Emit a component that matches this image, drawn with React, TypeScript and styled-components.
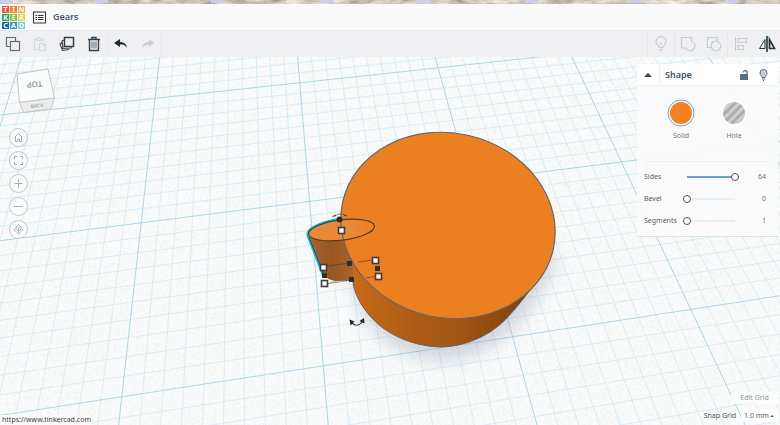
import React, { useState } from "react";
import styled, { createGlobalStyle } from "styled-components";

const GlobalStyle = createGlobalStyle`
  * { box-sizing: border-box; }
  html, body { margin: 0; height: 100%; }
  body { font-family: "Noto Sans", "Open Sans", sans-serif; font-size: 9px; color: #5c6b7c; overflow: hidden; }
  button, input, select { font: inherit; color: inherit; margin: 0; }
`;

const Page = styled.div`
  display: flex;
  flex-direction: column;
  min-height: 100vh;
  background: #f8f9f9;
`;

const PhotoStrip = styled.svg`
  display: block;
  width: 100%;
  height: 4px;
`;

const Header = styled.header`
  display: flex;
  align-items: center;
  height: 26px;
  padding-left: 1px;
  background: #fafafa;
`;

const Logo = styled.a`
  display: grid;
  grid-template-columns: repeat(3, 7px);
  grid-auto-rows: 7px;
  gap: 1px;
  padding: 1px;
  background: #fff;
  text-decoration: none;
`;

const LogoTile = styled.span<{ $color: string }>`
  display: flex;
  align-items: center;
  justify-content: center;
  background: ${(p) => p.$color};
  color: #fff;
  font-size: 7px;
  line-height: 7px;
  font-weight: 700;
`;

const MenuButton = styled.button`
  display: flex;
  margin-left: 7px;
  padding: 0;
  border: 0;
  background: none;
`;

const DesignName = styled.h1`
  margin: 0 0 0 7px;
  font-size: 9px;
  line-height: 14px;
  font-weight: 600;
  color: #46586b;
`;

const Toolbar = styled.div`
  display: flex;
  justify-content: space-between;
  height: 27px;
  background: #f0f0f3;
  border-top: 1px solid #e6e7ec;
`;

const ToolSide = styled.div`
  display: flex;
`;

const ToolGroup = styled.div<{ $side: "left" | "right" }>`
  display: flex;
  gap: ${(p) => (p.$side === "left" ? "1px" : "0")};
  border-right: ${(p) => (p.$side === "left" ? "1px solid #e6e7ea" : "0")};
  border-left: ${(p) => (p.$side === "right" ? "1px solid #e6e7ea" : "0")};
`;

const ToolButton = styled.button<{ $tone: string }>`
  display: flex;
  align-items: center;
  justify-content: center;
  width: 26px;
  padding: 0;
  border: 0;
  background: none;
  color: ${(p) => p.$tone};
`;

const Workspace = styled.main`
  flex: 1;
  display: grid;
  grid-template: minmax(0, 1fr) / minmax(0, 1fr);
  min-height: 0;
  overflow: hidden;
`;

const Scene = styled.svg`
  grid-area: 1 / 1;
  display: block;
  width: 100%;
  height: 100%;
`;

const Overlay = styled.div`
  grid-area: 1 / 1;
  z-index: 1;
  display: flex;
  justify-content: space-between;
`;

const LeftRail = styled.nav`
  display: flex;
  flex-direction: column;
  align-items: flex-start;
  padding-top: 10px;
`;

const ViewCube = styled.svg`
  margin-left: 14px;
  width: 44px;
  height: 48px;
`;

const ViewControls = styled.div`
  display: flex;
  flex-direction: column;
  gap: 4px;
  margin: 13px 0 0 9px;
`;

const RoundButton = styled.button`
  display: flex;
  align-items: center;
  justify-content: center;
  width: 19px;
  height: 19px;
  padding: 0;
  border: 1px solid #c4c8ca;
  border-radius: 50%;
  background: rgba(252, 252, 252, 0.8);
  color: #a9aeb2;
`;

const StatusUrl = styled.div`
  margin-top: auto;
  padding: 0 1px 0 2px;
  font-size: 7px;
  line-height: 10px;
  color: #444;
  background: #fafafa;
`;

const RightRail = styled.div`
  display: flex;
  flex-direction: column;
  justify-content: space-between;
  align-items: flex-end;
  padding: 7px 2px 3px 0;
`;

const Inspector = styled.section`
  width: 141px;
  background: rgba(251, 251, 252, 0.93);
  border-bottom: 1px solid #dfe2e6;
`;

const InspectorHeader = styled.div`
  display: flex;
  align-items: center;
  height: 22px;
  padding-right: 10px;
  background: #fff;
  border-bottom: 1px solid #eef0f1;
`;

const PlainButton = styled.button`
  display: flex;
  align-items: center;
  justify-content: center;
  padding: 0;
  border: 0;
  background: none;
  color: #5d6c7e;
`;

const CollapseButton = styled(PlainButton)`
  width: 23px;
  height: 100%;
  border-right: 1px solid #eef0f1;
  color: #2c4158;
`;

const InspectorTitle = styled.h2`
  flex: 1;
  margin: 0 0 0 5px;
  font-size: 9px;
  line-height: 14px;
  font-weight: 600;
  color: #42566b;
`;

const HeaderActions = styled.div`
  display: flex;
  gap: 10px;
`;

const Materials = styled.div`
  display: flex;
  justify-content: center;
  gap: 25px;
  margin: 0 7px;
  padding: 13px 0 19px;
  border-bottom: 1px solid #eff1f2;
`;

const Material = styled.button`
  display: flex;
  flex-direction: column;
  align-items: center;
  gap: 3px;
  width: 28px;
  padding: 0;
  border: 0;
  background: none;
  font-size: 7px;
  line-height: 12px;
  color: #6b7683;
`;

const Properties = styled.div`
  display: flex;
  flex-direction: column;
  padding: 4px 12px 4px 7px;
`;

const Property = styled.label`
  display: grid;
  grid-template-columns: 39px 56px 1fr;
  align-items: center;
  height: 22px;
  font-size: 7px;
  line-height: 12px;
  color: #4f5e70;
`;

const PropertyValue = styled.output`
  text-align: right;
  color: #66727f;
`;

const Range = styled.input<{ $filled: boolean }>`
  appearance: none;
  width: 56px;
  height: 10px;
  background: transparent;

  &::-webkit-slider-runnable-track {
    height: 2px;
    background-image: ${(p) =>
      p.$filled ? "linear-gradient(#6a9fe4, #6a9fe4)" : "linear-gradient(#eceeef, #eceeef)"};
    background-size: calc(100% - 8px) 2px;
    background-position: center;
    background-repeat: no-repeat;
  }
  &::-webkit-slider-thumb {
    appearance: none;
    width: 8px;
    height: 8px;
    margin-top: -3px;
    border: 1px solid #4d545c;
    border-radius: 50%;
    background: #fff;
  }
`;

const GridTools = styled.div`
  display: flex;
  flex-direction: column;
  align-items: flex-end;
  gap: 5px;
`;

const EditGrid = styled.button`
  width: 47px;
  height: 12px;
  padding: 0;
  border: 0;
  background: rgba(253, 253, 253, 0.9);
  font-size: 7px;
  line-height: 12px;
  color: #8a929a;
`;

const SnapLabel = styled.label`
  display: flex;
  align-items: center;
  gap: 5px;
  font-size: 7px;
  line-height: 13px;
  color: #4b5560;
`;

const SelectBox = styled.span`
  display: flex;
  align-items: center;
  width: 37px;
  height: 13px;
  padding: 0 4px 0 3px;
  background: rgba(253, 253, 253, 0.95);
  color: #5f6770;
`;

const Select = styled.select`
  flex: 1;
  min-width: 0;
  appearance: none;
  padding: 0;
  border: 0;
  background: none;
`;

/* ---------- workplane projection ---------- */

type Pt = [number, number];

const anchors: [Pt, Pt][] = [
  [[-1, 0], [3, 114.5]],
  [[0, 0], [155, 98.7]],
  [[1, 0], [299.3, 82.7]],
  [[0, 1], [143.3, 222.7]],
  [[1, 1], [310, 201.3]],
  [[0, 2], [121, 396.7]],
  [[1, 2], [322.7, 366]],
  [[2, 2], [512.3, 337]],
  [[3, 2], [691, 309.3]],
];

function solveProjection(pairs: [Pt, Pt][]): number[] {
  const m: number[][] = Array.from({ length: 8 }, () => new Array(9).fill(0));
  pairs.forEach(([[u, v], [px, py]]) => {
    const x = px / 100;
    const y = py / 100;
    [
      [u, v, 1, 0, 0, 0, -u * x, -v * x, x],
      [0, 0, 0, u, v, 1, -u * y, -v * y, y],
    ].forEach((row) => {
      for (let i = 0; i < 8; i++) for (let j = 0; j < 9; j++) m[i][j] += row[i] * row[j];
    });
  });
  for (let i = 0; i < 8; i++) {
    let p = i;
    for (let r = i + 1; r < 8; r++) if (Math.abs(m[r][i]) > Math.abs(m[p][i])) p = r;
    [m[i], m[p]] = [m[p], m[i]];
    for (let r = 0; r < 8; r++) {
      if (r === i) continue;
      const f = m[r][i] / m[i][i];
      for (let c = i; c < 9; c++) m[r][c] -= f * m[i][c];
    }
  }
  return m.map((row, i) => row[8] / row[i]);
}

const H = solveProjection(anchors);

const project = (u: number, v: number): Pt => {
  const w = H[6] * u + H[7] * v + 1;
  return [(100 * (H[0] * u + H[1] * v + H[2])) / w, (100 * (H[3] * u + H[4] * v + H[5])) / w];
};

const line = (a: Pt, b: Pt) => `M${a[0].toFixed(1)} ${a[1].toFixed(1)}L${b[0].toFixed(1)} ${b[1].toFixed(1)}`;

function gridPaths() {
  let minor = "";
  let major = "";
  const add = (i: number, d: string) => {
    if (i % 10 === 0) major += d;
    else minor += d;
  };
  for (let i = -30; i <= 70; i++) add(i, line(project(i / 10, -1), project(i / 10, 3)));
  for (let i = -10; i <= 30; i++) add(i, line(project(-3, i / 10), project(7, i / 10)));
  return { minor, major };
}

const grid = gridPaths();

const handles: Pt[] = [[341, 230], [323, 267], [324, 283], [375, 260], [378, 276]];
const knobs: Pt[] = [[349, 263], [351, 279], [324, 275], [377, 268]];

function Workplane() {
  return (
    <Scene viewBox="0 57 780 368" preserveAspectRatio="xMidYMid slice" role="img" aria-label="Workplane">
      <defs>
        <filter id="paper" x="0" y="0" width="100%" height="100%">
          <feTurbulence type="fractalNoise" baseFrequency="0.35" numOctaves="2" seed="4" />
          <feColorMatrix values="0 0 0 0 0.5  0 0 0 0 0.52  0 0 0 0 0.53  0.55 0 0 0 -0.22" />
        </filter>
        <filter id="soft" x="-30%" y="-30%" width="160%" height="160%">
          <feGaussianBlur stdDeviation="9" />
        </filter>
        <linearGradient id="side" x1="352" y1="0" x2="540" y2="0" gradientUnits="userSpaceOnUse">
          <stop offset="0" stopColor="#c96a18" />
          <stop offset="0.3" stopColor="#b05d15" />
          <stop offset="0.6" stopColor="#9d5412" />
          <stop offset="0.8" stopColor="#8c4a10" />
          <stop offset="1" stopColor="#6e3d12" />
        </linearGradient>
        <linearGradient id="smallSide" x1="310" y1="0" x2="353" y2="0" gradientUnits="userSpaceOnUse">
          <stop offset="0" stopColor="#a8622a" />
          <stop offset="0.5" stopColor="#965720" />
          <stop offset="1" stopColor="#a9632a" />
        </linearGradient>
        <linearGradient id="smallTop" x1="308" y1="0" x2="375" y2="0" gradientUnits="userSpaceOnUse">
          <stop offset="0" stopColor="#e8893a" />
          <stop offset="0.6" stopColor="#ea8a38" />
          <stop offset="1" stopColor="#eb8020" />
        </linearGradient>
      </defs>
      <rect x="0" y="57" width="780" height="368" fill="#fafbfb" />
      <rect x="0" y="57" width="780" height="368" filter="url(#paper)" opacity="0.5" />
      <path d={grid.minor} stroke="#c4e6f1" strokeWidth="1" fill="none" opacity="0.6" />
      <path d={grid.major} stroke="#a4d2e4" strokeWidth="1" fill="none" opacity="0.9" />

      <path d="M335 275L352 272C356 330 400 362 448 360C500 356 535 310 556 262L548 250L350 250Z" fill="#8796ad" opacity="0.36" filter="url(#soft)" />
      <path
        d="M350 258L353 282C355 298 367 316 383 328C401 341 423 347 442 347C464 346 483 338 497 327C511 316 523 299 537 281L549 258Z"
        fill="url(#side)"
        stroke="#6b6258"
        strokeWidth="1"
      />
      <path d="M308.500 234L324 275C328 282 345 283 352 279L353 265L344 232Z" fill="url(#smallSide)" />
      <ellipse cx="448" cy="225.500" rx="107.900" ry="92.400" transform="rotate(13 448 225.500)" fill="#ec8020" />
      <ellipse cx="341.500" cy="230" rx="33.200" ry="10.200" transform="rotate(-7 341.500 230)" fill="url(#smallTop)" />
      <ellipse cx="448" cy="225.500" rx="107.900" ry="92.400" transform="rotate(13 448 225.500)" fill="none" stroke="#62676b" strokeWidth="1.200" />
      <path d="M339 219C323 222 305 228 308 236L323 275" fill="none" stroke="#12b7e6" strokeWidth="2.500" />
      <ellipse cx="341.500" cy="230" rx="33.200" ry="10.200" transform="rotate(-7 341.500 230)" fill="none" stroke="#4f3a22" strokeWidth="1.200" />
      <path d="M309 237L324 275" stroke="#3a3a3a" strokeWidth="1" />
      <path d="M327 266L350 263M358 262L373 260M325 284L351 280M366 278L378 276" stroke="#5a4027" strokeWidth="0.700" fill="none" />
      <path d="M330 282L346 281" stroke="#8fcfe0" strokeWidth="1" />

      <g fill="none" stroke="#3d3d3d">
        <path d="M334 217Q340 211 346 216" strokeWidth="0.600" />
        <path d="M332.500 216.500L336 215M344 215L347 216" strokeWidth="1" />
        <path d="M351 322Q357 329 363 321" strokeWidth="1.200" />
      </g>
      <path d="M349.500 319.500L354.500 321.500L350.500 325.500ZM364 318L364.500 323.500L359.500 321Z" fill="#262626" />
      <circle cx="339.500" cy="219.500" r="3" fill="#2c2c2c" />
      {knobs.map(([x, y]) => (
        <rect key={`${x}-${y}`} x={x - 2} y={y - 2} width="5" height="5" fill="#2e2e2e" />
      ))}
      {handles.map(([x, y]) => (
        <rect key={`${x}-${y}`} x={x - 2.5} y={y - 2.5} width="6" height="6" fill="#f6f6f6" stroke="#3c3c3c" strokeWidth="1.600" />
      ))}
    </Scene>
  );
}

/* ---------- icons ---------- */

interface IconProps {
  w?: number;
  h?: number;
  sw?: number;
  children: React.ReactNode;
}

const Icon = ({ w = 16, h = 16, sw = 1.2, children }: IconProps) => (
  <svg width={w} height={h} viewBox={`0 0 ${w} ${h}`} fill="none" stroke="currentColor" strokeWidth={sw} aria-hidden="true">
    {children}
  </svg>
);

const CopyIcon = () => (
  <Icon>
    <path d="M5 10.500H1.500V1.500H10.500V5" />
    <rect x="5.500" y="5.500" width="9" height="9" />
  </Icon>
);
const PasteIcon = () => (
  <Icon>
    <path d="M6 13.500H2.500V3.500H4M10 3.500H11.500V6" />
    <path d="M4.500 4.500V2.500H6L7 1.500L8 2.500H9.500V4.500Z" />
    <path d="M7.500 7.500H11.500L13.500 9.500V14.500H7.500ZM11.500 7.500V9.500H13.500" />
  </Icon>
);
const DuplicateIcon = () => (
  <Icon sw={1.5}>
    <rect x="5.500" y="1.500" width="9" height="9" />
    <path d="M5 4L3 5L4 12.500L12 12L12.500 11M3 6.500L1 8L3.500 14.500L10 13.500" strokeWidth="1.100" />
  </Icon>
);
const TrashIcon = () => (
  <Icon sw={1.4}>
    <path d="M2 3.500H14M6 3V1.500H10V3M3.500 4V14.500H12.500V4" />
    <path d="M6 5.500V12.500M8 5.500V12.500M10 5.500V12.500" strokeWidth="0.800" />
  </Icon>
);
const UndoIcon = () => (
  <Icon>
    <path d="M1 7L7 3V6C11 6 13.500 8 14 12C12 9 10.500 8.500 7 8.500V11Z" fill="currentColor" stroke="none" />
  </Icon>
);
const RedoIcon = () => (
  <Icon>
    <path d="M14 7L9 3.500V6C5 6 2.500 8 2 12C4 9 6 8.500 9 8.500V11Z" fill="currentColor" stroke="none" />
  </Icon>
);
const BulbIcon = () => (
  <Icon>
    <path d="M6 11.500C6 9.500 3 8.500 3 5.700A5 5 0 0 1 13 5.700C13 8.500 10 9.500 10 11.500Z" />
    <path d="M6 13.500H10M7 15H9M6.500 6.500L8 8L9.500 6.500M8 8V11" strokeWidth="0.900" />
  </Icon>
);
const GroupIcon = () => (
  <Icon>
    <path d="M1.500 1.500H11.500V5A5 5 0 1 1 5.500 12H1.500Z" />
  </Icon>
);
const UngroupIcon = () => (
  <Icon>
    <path d="M5 11.500H1.500V1.500H11.500V5" />
    <circle cx="10" cy="10" r="4.800" />
    <path d="M5.500 8V5.500H9" strokeWidth="0.900" />
  </Icon>
);
const AlignIcon = () => (
  <Icon>
    <path d="M2.500 1V15M5 2.500H13.500V6.500H5ZM5 9.500H10.500V13.500H5Z" />
  </Icon>
);
const MirrorIcon = () => (
  <Icon w={18} sw={1}>
    <path d="M7 3.500V12.500H1.500Z" />
    <path d="M11.500 3.500V12.500H16.500Z" strokeWidth="1.700" />
    <path d="M9 0V16" strokeWidth="1.600" />
  </Icon>
);
const LockIcon = () => (
  <Icon w={9} h={12} sw={1.3}>
    <rect x="0" y="5" width="8" height="6" fill="currentColor" stroke="none" />
    <path d="M3.500 3.500V3A2 2 0 0 1 7 2.500V6" />
  </Icon>
);
const SmallBulbIcon = () => (
  <Icon w={9} h={12} sw={1}>
    <path d="M3 8.500C3 7 1 6.500 1 4A3.500 3.500 0 0 1 8 4C8 6.500 6 7 6 8.500Z" fill="#c9ced5" />
    <path d="M3 10H6M4 11.500H5" />
  </Icon>
);
const Caret = ({ size }: { size: number }) => (
  <svg width={size} height={size / 2} viewBox="0 0 8 4" aria-hidden="true">
    <path d="M4 0L8 4H0Z" fill="currentColor" />
  </svg>
);

const viewIcons: [string, React.ReactNode][] = [
  ["Home view", <path key="p" d="M1.500 5.500L5.500 1.500L9.500 5.500M2.500 5V9.500H4.500V7H6.500V9.500H8.500V5" />],
  ["Fit all in view", <path key="p" d="M1.500 4V1.500H4M7 1.500H9.500V4M9.500 7V9.500H7M4 9.500H1.500V7" />],
  ["Zoom in", <path key="p" d="M5.500 1.500V9.500M1.500 5.500H9.500" />],
  ["Zoom out", <path key="p" d="M1 5.500H10" />],
  ["Switch projection", <path key="p" strokeWidth="0.800" d="M3 2.500L5.500 1L8 2.500V5.500L5.500 7L3 5.500ZM5.500 4V9.500M3 2.500L5.500 4L8 2.500M2.500 4.500L1 6L5.500 10L10 6L8.500 4.500" />],
];

const logoTiles: [string, string][] = [
  ["T", "#f0522b"], ["I", "#f58025"], ["N", "#f9a847"],
  ["K", "#22a650"], ["E", "#7cc042"], ["R", "#d2d63c"],
  ["C", "#0c69b0"], ["A", "#3594d2"], ["D", "#7cc2e8"],
];

const DARK = "#30424b";
const MUTED = "#c3ced8";

function ShapeProperty(props: { label: string; min: number; max: number; initial: number }) {
  const [value, setValue] = useState(props.initial);
  return (
    <Property>
      {props.label}
      <Range
        type="range"
        min={props.min}
        max={props.max}
        value={value}
        $filled={value === props.max}
        onChange={(e) => setValue(Number(e.target.value))}
      />
      <PropertyValue>{value}</PropertyValue>
    </Property>
  );
}

export default function App() {
  return (
    <Page>
      <GlobalStyle />
      <PhotoStrip aria-hidden="true">
        <defs>
          <filter id="stone" x="0" y="0" width="100%" height="100%">
            <feTurbulence type="fractalNoise" baseFrequency="0.06 0.2" numOctaves="3" seed="8" />
            <feColorMatrix values="0.9 0 0 0 0.18  0.85 0 0 0 0.15  0.8 0 0 0 0.1  0 0 0 0 1" />
          </filter>
        </defs>
        <rect width="100%" height="4" filter="url(#stone)" />
        <g fill="#c7d0ea">
          {[-1, 94, 211, 320, 416, 525, 629, 725].map((x) => (
            <rect key={x} x={x} width="14" height="3" />
          ))}
        </g>
      </PhotoStrip>
      <Header>
        <Logo href="#" aria-label="Tinkercad">
          {logoTiles.map(([letter, color]) => (
            <LogoTile key={letter} $color={color}>{letter}</LogoTile>
          ))}
        </Logo>
        <MenuButton aria-label="Designs">
          <svg width="13" height="13" viewBox="0 0 13 13" fill="none" stroke="#2d3438" aria-hidden="true">
            <rect x="0.500" y="1" width="12" height="11" />
            <path d="M5 4.500H10.500M5 6.500H10.500M5 8.500H10.500M2.500 4.500H4M2.500 6.500H4M2.500 8.500H4" />
          </svg>
        </MenuButton>
        <DesignName>Gears</DesignName>
      </Header>
      <Toolbar role="toolbar">
        <ToolSide>
          <ToolGroup $side="left">
            <ToolButton $tone="#5f6e76" aria-label="Copy"><CopyIcon /></ToolButton>
            <ToolButton $tone="#d3dbe2" aria-label="Paste"><PasteIcon /></ToolButton>
            <ToolButton $tone={DARK} aria-label="Duplicate"><DuplicateIcon /></ToolButton>
            <ToolButton $tone={DARK} aria-label="Delete"><TrashIcon /></ToolButton>
          </ToolGroup>
          <ToolGroup $side="left">
            <ToolButton $tone="#1f2f33" aria-label="Undo"><UndoIcon /></ToolButton>
            <ToolButton $tone={MUTED} aria-label="Redo"><RedoIcon /></ToolButton>
          </ToolGroup>
        </ToolSide>
        <ToolSide>
          <ToolGroup $side="right">
            <ToolButton $tone={MUTED} aria-label="Show all"><BulbIcon /></ToolButton>
          </ToolGroup>
          <ToolGroup $side="right">
            <ToolButton $tone={MUTED} aria-label="Group"><GroupIcon /></ToolButton>
            <ToolButton $tone={MUTED} aria-label="Ungroup"><UngroupIcon /></ToolButton>
          </ToolGroup>
          <ToolGroup $side="right">
            <ToolButton $tone={MUTED} aria-label="Align"><AlignIcon /></ToolButton>
            <ToolButton $tone="#26343b" aria-label="Mirror"><MirrorIcon /></ToolButton>
          </ToolGroup>
        </ToolSide>
      </Toolbar>
      <Workspace>
        <Workplane />
        <Overlay>
          <LeftRail>
            <ViewCube viewBox="0 0 44 48" role="img" aria-label="View cube">
              <g stroke="#c3c6c8" strokeWidth="1">
                <path d="M3 7L34 2L40.500 31L5.500 35.500Z" fill="#fbfcfc" />
                <path d="M5.500 35.500L40.500 31L36.500 42L9.500 45.500Z" fill="#ececed" />
              </g>
              <text transform="translate(20.500 17.500) rotate(174)" y="3" textAnchor="middle" fontSize="8" fontWeight="600" fill="#9da0a3">TOP</text>
              <text transform="translate(23 38.500) rotate(-6)" y="2" textAnchor="middle" fontSize="5" fontWeight="600" fill="#a3a6a8">BACK</text>
            </ViewCube>
            <ViewControls>
              {viewIcons.map(([label, art]) => (
                <RoundButton key={label} aria-label={label}>
                  <Icon w={11} h={11} sw={1}>{art}</Icon>
                </RoundButton>
              ))}
            </ViewControls>
            <StatusUrl>https://www.tinkercad.com</StatusUrl>
          </LeftRail>
          <RightRail>
            <Inspector>
              <InspectorHeader>
                <CollapseButton aria-label="Collapse"><Caret size={8} /></CollapseButton>
                <InspectorTitle>Shape</InspectorTitle>
                <HeaderActions>
                  <PlainButton aria-label="Lock"><LockIcon /></PlainButton>
                  <PlainButton aria-label="Hide"><SmallBulbIcon /></PlainButton>
                </HeaderActions>
              </InspectorHeader>
              <Materials>
                <Material>
                  <svg width="28" height="28" viewBox="0 0 28 28" aria-hidden="true">
                    <circle cx="14" cy="14" r="13" fill="#fff" stroke="#6b9fe3" />
                    <circle cx="14" cy="14" r="11" fill="#f58220" />
                  </svg>
                  Solid
                </Material>
                <Material>
                  <svg width="28" height="28" viewBox="0 0 28 28" aria-hidden="true">
                    <defs>
                      <pattern id="hole" width="6" height="6" patternUnits="userSpaceOnUse" patternTransform="rotate(45)">
                        <rect width="6" height="6" fill="#cfcfcf" />
                        <rect width="3" height="6" fill="#adadad" />
                      </pattern>
                    </defs>
                    <circle cx="14" cy="14" r="13" fill="#fff" />
                    <circle cx="14" cy="14" r="11" fill="url(#hole)" />
                  </svg>
                  Hole
                </Material>
              </Materials>
              <Properties>
                <ShapeProperty label="Sides" min={3} max={64} initial={64} />
                <ShapeProperty label="Bevel" min={0} max={10} initial={0} />
                <ShapeProperty label="Segments" min={1} max={10} initial={1} />
              </Properties>
            </Inspector>
            <GridTools>
              <EditGrid>Edit Grid</EditGrid>
              <SnapLabel>
                Snap Grid
                <SelectBox>
                  <Select defaultValue="1.0 mm">
                    <option>1.0 mm</option>
                  </Select>
                  <Caret size={4} />
                </SelectBox>
              </SnapLabel>
            </GridTools>
          </RightRail>
        </Overlay>
      </Workspace>
    </Page>
  );
}
